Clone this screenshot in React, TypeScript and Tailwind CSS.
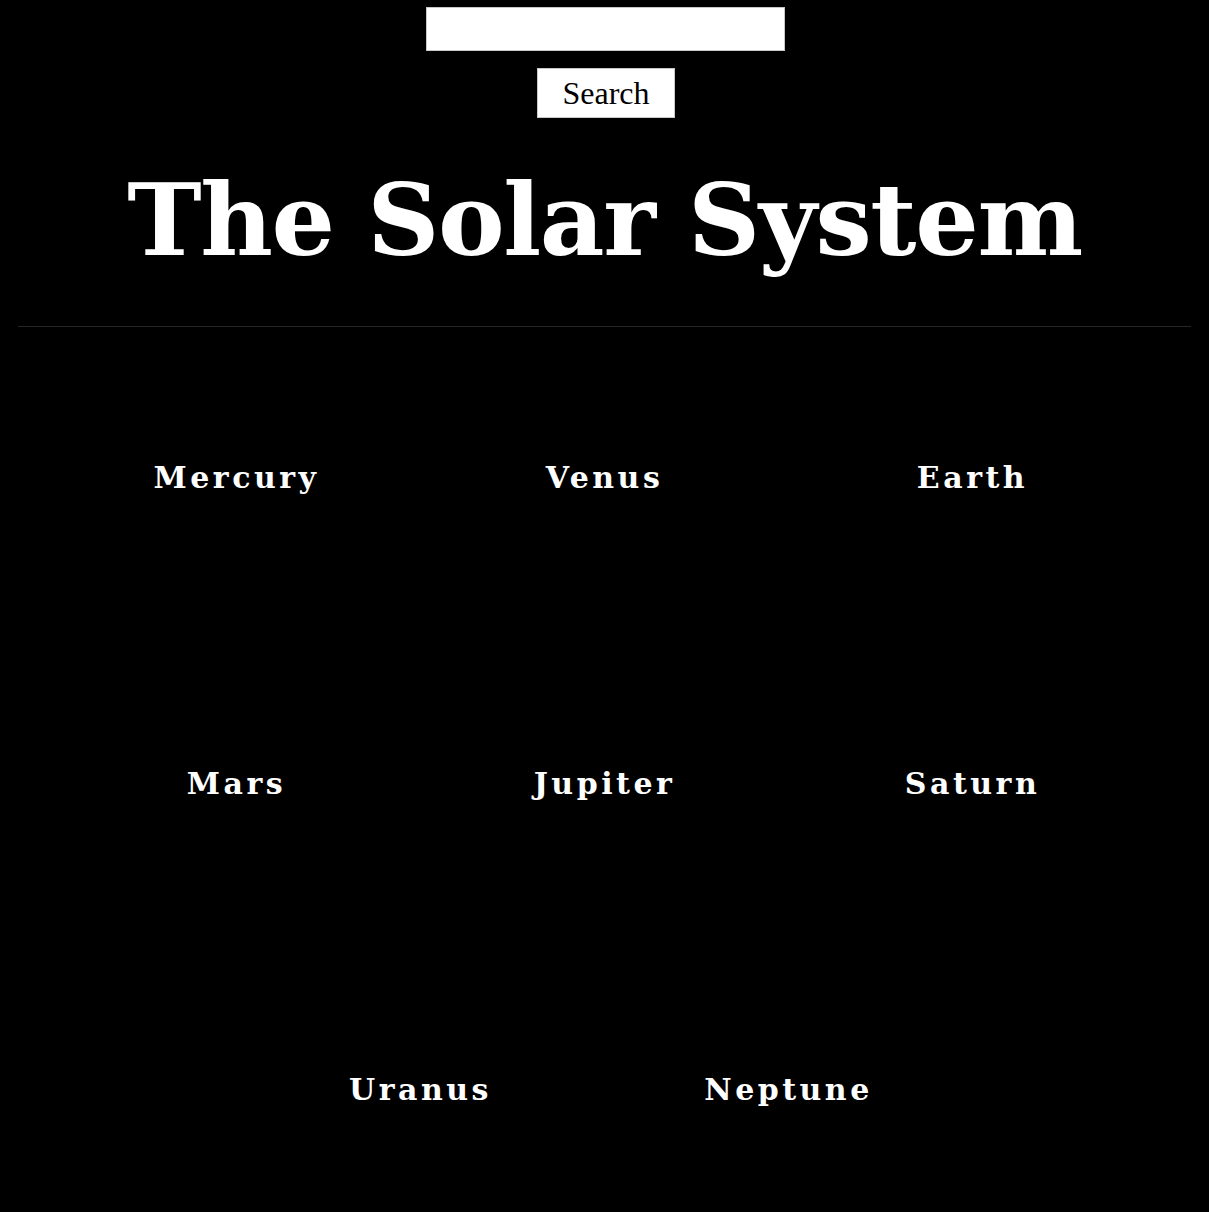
const planets = ["Mercury", "Venus", "Earth", "Mars", "Jupiter", "Saturn", "Uranus", "Neptune"];

export default function App() {
  return (
    <div className="min-h-[1212px] bg-black text-white [font-family:'DejaVu_Serif',serif]">
      <div className="flex flex-col items-center pt-[7px] pl-px">
        <input
          type="text"
          className="h-[44px] w-[359px] border border-[#c8c8c8] bg-white text-black outline-none"
        />
        <button className="mt-[17px] ml-[2px] h-[50px] w-[138px] border border-[#c8c8c8] bg-white text-[32px] leading-none text-black [font-family:'Liberation_Serif',serif]">
          Search
        </button>
      </div>

      <h1 className="mt-[44px] text-center text-[100px] font-bold leading-[116px] tracking-[-1.4px]">The Solar System</h1>

      <hr className="mx-[18px] mt-[48px] border-t border-[#262626]" />

      <div className="mx-auto flex w-[1106px] flex-wrap justify-center">
        {planets.map((p) => (
          <div key={p} className="flex h-[306px] w-[368px] items-center justify-center pb-[6px]">
            <h2 className="text-[30px] font-bold tracking-[3.5px]">{p}</h2>
          </div>
        ))}
      </div>
    </div>
  );
}
